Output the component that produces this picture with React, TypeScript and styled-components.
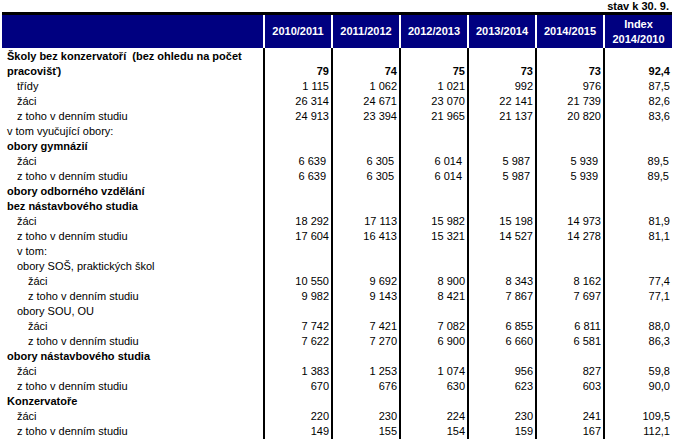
import React from 'react';
import styled, { createGlobalStyle } from 'styled-components';

type Row = {
  label: string;
  level?: number;
  bold?: boolean;
  values?: string[];
  tall?: boolean;
  inset?: boolean;
};

const years = ['2010/2011', '2011/2012', '2012/2013', '2013/2014', '2014/2015'];

const rows: Row[] = [
  {
    label: 'Školy bez konzervatoří  (bez ohledu na počet pracovišť)',
    bold: true,
    tall: true,
    values: ['79', '74', '75', '73', '73', '92,4'],
  },
  { label: 'třídy', level: 1, values: ['1 115', '1 062', '1 021', '992', '976', '87,5'] },
  { label: 'žáci', level: 1, values: ['26 314', '24 671', '23 070', '22 141', '21 739', '82,6'] },
  { label: 'z toho v denním studiu', level: 1, values: ['24 913', '23 394', '21 965', '21 137', '20 820', '83,6'] },
  { label: 'v tom vyučující obory:' },
  { label: 'obory gymnázií', bold: true },
  { label: 'žáci', level: 1, inset: true, values: ['6 639', '6 305', '6 014', '5 987', '5 939', '89,5'] },
  { label: 'z toho v denním studiu', level: 1, inset: true, values: ['6 639', '6 305', '6 014', '5 987', '5 939', '89,5'] },
  { label: 'obory odborného vzdělání', bold: true },
  { label: 'bez nástavbového studia', bold: true },
  { label: 'žáci', level: 1, values: ['18 292', '17 113', '15 982', '15 198', '14 973', '81,9'] },
  { label: 'z toho v denním studiu', level: 1, values: ['17 604', '16 413', '15 321', '14 527', '14 278', '81,1'] },
  { label: 'v tom:', level: 1 },
  { label: 'obory SOŠ, praktických škol', level: 1 },
  { label: 'žáci', level: 2, values: ['10 550', '9 692', '8 900', '8 343', '8 162', '77,4'] },
  { label: 'z toho v denním studiu', level: 2, values: ['9 982', '9 143', '8 421', '7 867', '7 697', '77,1'] },
  { label: 'obory SOU, OU', level: 1 },
  { label: 'žáci', level: 2, values: ['7 742', '7 421', '7 082', '6 855', '6 811', '88,0'] },
  { label: 'z toho v denním studiu', level: 2, values: ['7 622', '7 270', '6 900', '6 660', '6 581', '86,3'] },
  { label: 'obory nástavbového studia', bold: true },
  { label: 'žáci', level: 1, values: ['1 383', '1 253', '1 074', '956', '827', '59,8'] },
  { label: 'z toho v denním studiu', level: 1, values: ['670', '676', '630', '623', '603', '90,0'] },
  { label: 'Konzervatoře', bold: true },
  { label: 'žáci', level: 1, values: ['220', '230', '224', '230', '241', '109,5'] },
  { label: 'z toho v denním studiu', level: 1, values: ['149', '155', '154', '159', '167', '112,1'] },
];

const indent = [5, 15, 26];

const App: React.FC = () => {
  return (
    <Page>
      <GlobalStyle />
      <Caption>stav k 30. 9.</Caption>
      <Table>
        <thead>
          <tr>
            <HeadCell $first style={{ width: 261 }} />
            {years.map((y) => (
              <HeadCell key={y} style={{ width: 68 }}>
                {y}
              </HeadCell>
            ))}
            <HeadCell style={{ width: 69 }}>
              Index
              <br />
              2014/2010
            </HeadCell>
          </tr>
        </thead>
        <tbody>
          {rows.map((row, i) => (
            <BodyRow key={i} $tall={row.tall}>
              <Label $indent={indent[row.level ?? 0]} $bold={row.bold} $tall={row.tall}>
                {row.label}
              </Label>
              {Array.from({ length: 6 }).map((_, j) => (
                <Value
                  key={j}
                  $bold={row.bold}
                  $pad={row.inset ? (j === 5 ? 3 : 5) : 2}
                >
                  {row.values?.[j]}
                </Value>
              ))}
            </BodyRow>
          ))}
        </tbody>
      </Table>
    </Page>
  );
};

const GlobalStyle = createGlobalStyle`
  * {
    box-sizing: border-box;
  }
  body {
    margin: 0;
    background: #ffffff;
    color: #000000;
    font-family: "Liberation Sans", Arial, sans-serif;
    font-size: 11px;
  }
`;

const Page = styled.div`
  width: 676px;
  padding: 0 4px 0 2px;
`;

const Caption = styled.div`
  height: 12px;
  line-height: 12px;
  padding-right: 3px;
  text-align: right;
  font-weight: bold;
`;

const Table = styled.table`
  width: 670px;
  table-layout: fixed;
  border-collapse: separate;
  border-spacing: 0;
  border-top: 3px solid #000000;
`;

const HeadCell = styled.th<{ $first?: boolean }>`
  height: 33px;
  padding: 0;
  background: #000080;
  color: #ffffff;
  font-weight: bold;
  font-size: 11px;
  line-height: 15px;
  text-align: center;
  vertical-align: middle;
  border-left: ${(p) => (p.$first ? 'none' : '2px solid #ffffff')};
`;

const BodyRow = styled.tr<{ $tall?: boolean }>`
  height: ${(p) => (p.$tall ? 31 : 15)}px;
`;

const Label = styled.td<{ $indent: number; $bold?: boolean; $tall?: boolean }>`
  padding: ${(p) => (p.$tall ? '1px' : '0')} 0 0 ${(p) => p.$indent}px;
  font-weight: ${(p) => (p.$bold ? 'bold' : 'normal')};
  line-height: 15px;
  white-space: pre-wrap;
  vertical-align: ${(p) => (p.$tall ? 'top' : 'bottom')};
`;

const Value = styled.td<{ $bold?: boolean; $pad: number }>`
  padding: 0 ${(p) => p.$pad}px 0 0;
  border-left: 2px solid #000000;
  font-weight: ${(p) => (p.$bold ? 'bold' : 'normal')};
  line-height: 15px;
  text-align: right;
  white-space: nowrap;
  vertical-align: bottom;
`;

export default App;
